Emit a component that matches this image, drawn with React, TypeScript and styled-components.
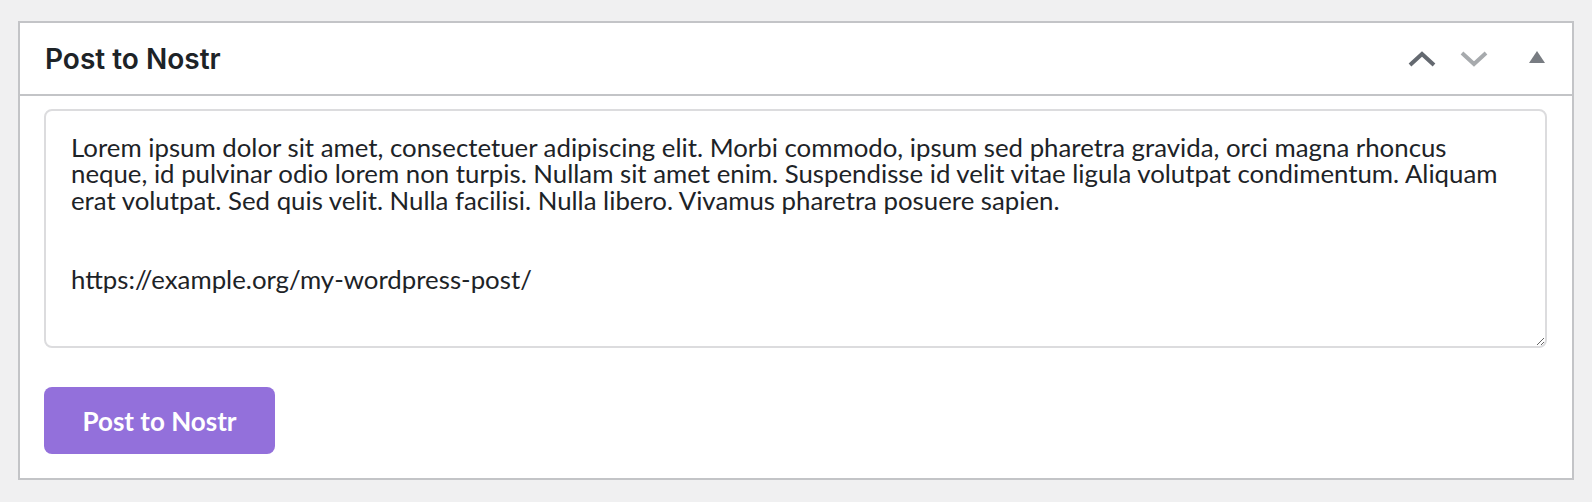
import styled, { createGlobalStyle } from 'styled-components'

const GlobalStyle = createGlobalStyle`
  html, body {
    margin: 0;
    padding: 0;
    background: #f0f0f1;
  }
`

// line breaks kept where the editor wraps them
const POST_TEXT = [
  'Lorem ipsum dolor sit amet, consectetuer adipiscing elit. Morbi commodo, ipsum sed pharetra gravida, orci magna rhoncus',
  'neque, id pulvinar odio lorem non turpis. Nullam sit amet enim. Suspendisse id velit vitae ligula volutpat condimentum. Aliquam',
  'erat volutpat. Sed quis velit. Nulla facilisi. Nulla libero. Vivamus pharetra posuere sapien.',
  '',
  '',
  'https://example.org/my-wordpress-post/',
].join('\n')

const ChevronIcon = ({ up }: { up?: boolean }) => (
  <svg width="28" height="16" viewBox="0 0 28 16" aria-hidden="true">
    <polyline
      points={up ? '2,14 14,3 26,14' : '2,2 14,13 26,2'}
      fill="none"
      stroke="currentColor"
      strokeWidth="4"
    />
  </svg>
)

const TriangleIcon = () => (
  <svg width="16" height="12" viewBox="0 0 16 12" aria-hidden="true">
    <polygon points="8,0 16,12 0,12" fill="currentColor" />
  </svg>
)

const App = () => {
  return (
    <Page>
      <GlobalStyle />
      <Postbox>
        <Header>
          <Title>Post to Nostr</Title>
          <Actions>
            <IconButton type="button" aria-label="Move up" $tone="#646970">
              <ChevronIcon up />
            </IconButton>
            <IconButton type="button" aria-label="Move down" $tone="#a7aaad">
              <ChevronIcon />
            </IconButton>
            <ToggleButton type="button" aria-label="Toggle panel">
              <TriangleIcon />
            </ToggleButton>
          </Actions>
        </Header>
        <Inside>
          <Message defaultValue={POST_TEXT} spellCheck={false} />
          <PostButton type="button">Post to Nostr</PostButton>
        </Inside>
      </Postbox>
    </Page>
  )
}

const Page = styled.div`
  padding: 21px 18px 22px;
`
const Postbox = styled.div`
  background: #fff;
  border: 2px solid #c3c4c7;
`
const Header = styled.div`
  height: 71px;
  display: flex;
  justify-content: space-between;
  align-items: center;
  padding: 0 15px 0 25px;
  border-bottom: 2px solid #c3c4c7;
`
const Title = styled.h2`
  margin: 0;
  font-family: Inter, 'Noto Sans', sans-serif;
  font-size: 28px;
  font-weight: 600;
  color: #1d2327;
`
const Actions = styled.div`
  display: flex;
  align-items: center;
  gap: 12px;
`
const IconButton = styled.button<{ $tone: string }>`
  display: flex;
  align-items: center;
  justify-content: center;
  width: 40px;
  height: 40px;
  padding: 0;
  border: 0;
  background: none;
  color: ${(p) => p.$tone};
  cursor: pointer;
`
const ToggleButton = styled(IconButton).attrs({ $tone: '#787c82' })`
  margin-left: 11px;
  padding-bottom: 3px;
`
const Inside = styled.div`
  display: flex;
  flex-direction: column;
  align-items: flex-start;
  gap: 39px;
  padding: 13px 25px 24px 24px;
`
const Message = styled.textarea`
  box-sizing: border-box;
  width: 100%;
  height: 239px;
  margin: 0;
  padding: 23px 18px 20px 25px;
  border: 2px solid #dcdcde;
  border-radius: 8px;
  font-family: Lato, 'Open Sans', sans-serif;
  font-size: 25.8px;
  line-height: 26.4px;
  color: #1d2327;
  background: #fff;
  outline: none;
`
const PostButton = styled.button`
  width: 231px;
  height: 67px;
  padding: 0;
  border: 0;
  border-radius: 8px;
  background: #9370db;
  color: #fff;
  font-family: Lato, 'Open Sans', sans-serif;
  font-size: 26px;
  font-weight: 700;
  cursor: pointer;
`

export default App
